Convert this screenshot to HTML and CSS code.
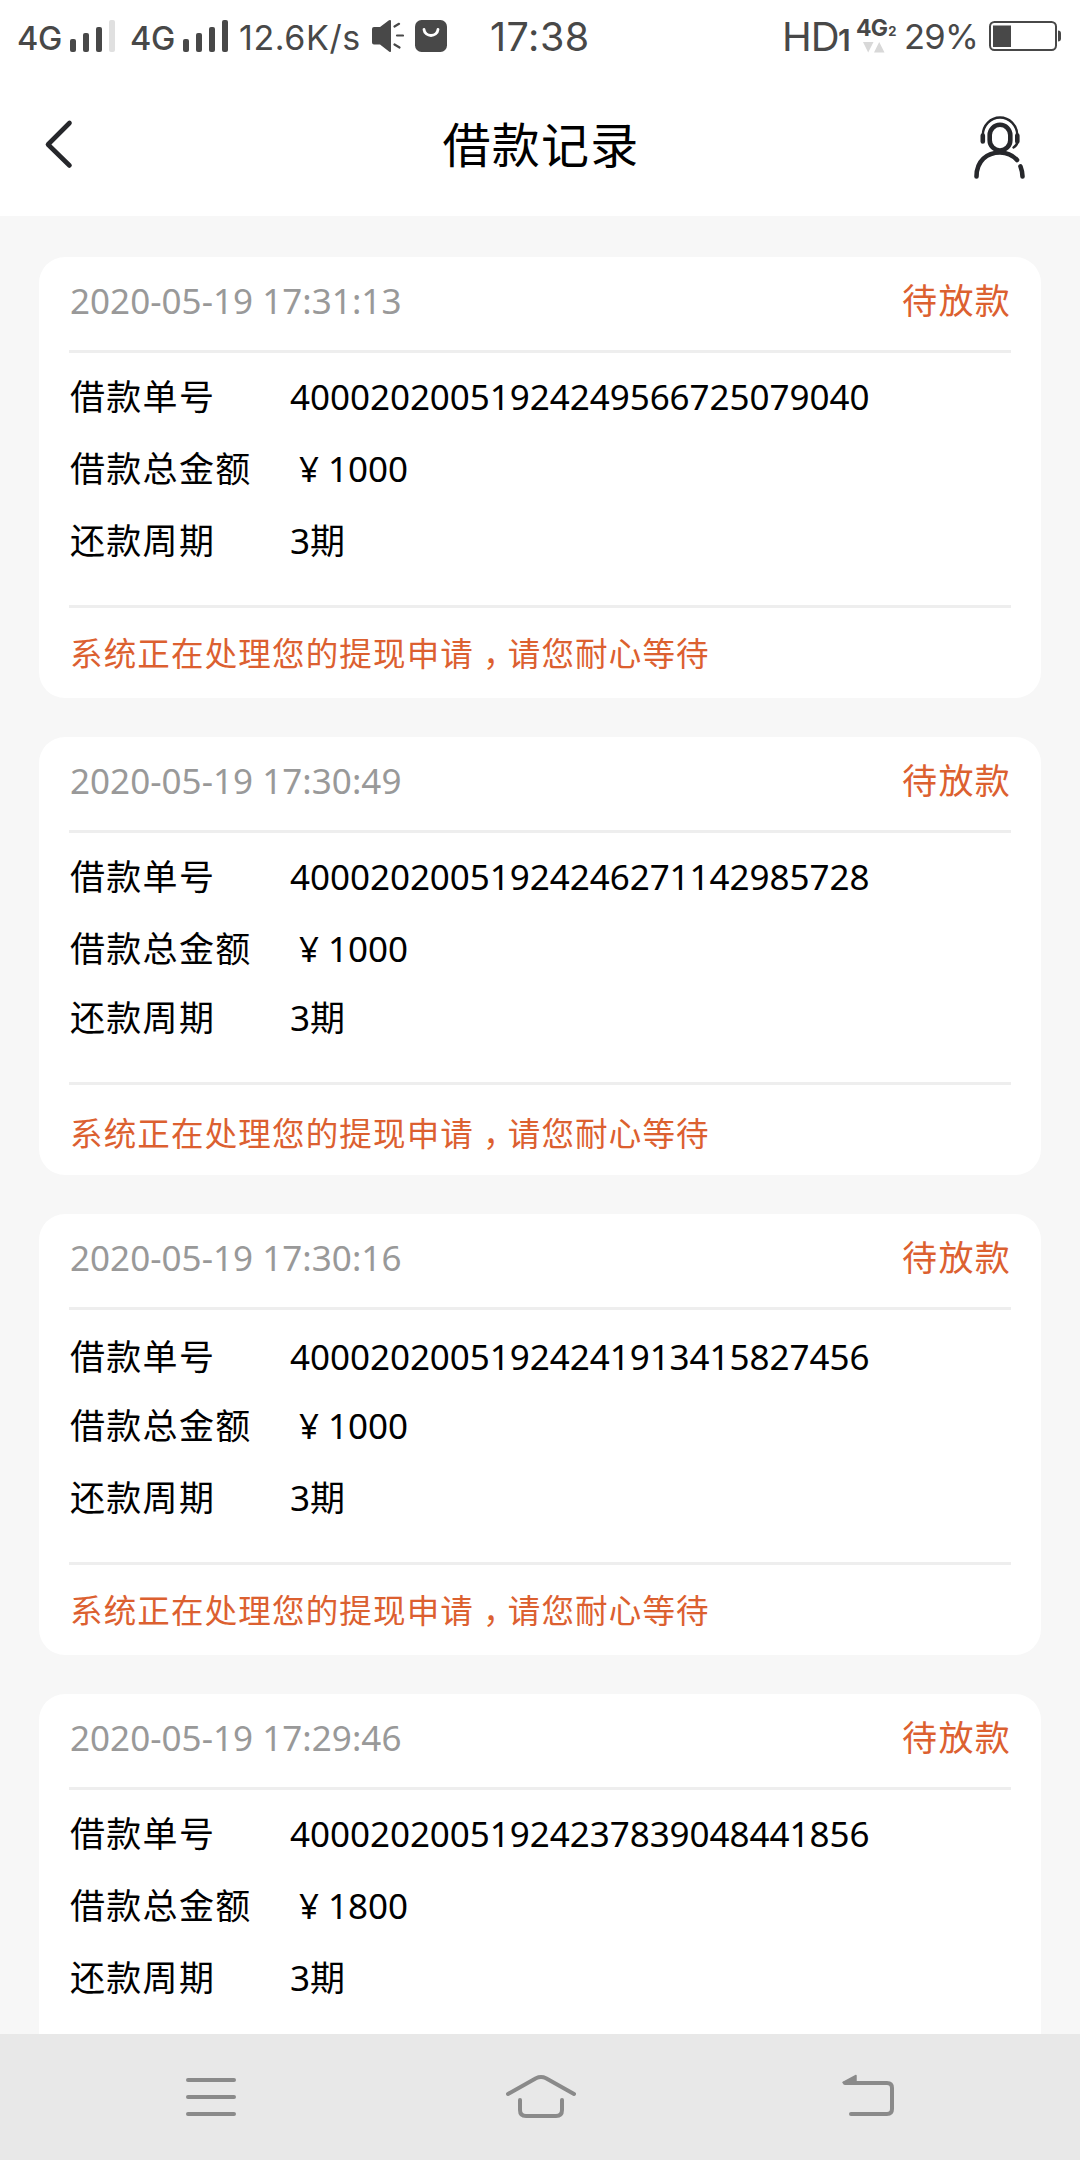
FILE: index.html
```html
<!DOCTYPE html>
<html lang="zh-CN">
<head>
<meta charset="utf-8">
<title>借款记录</title>
<link rel="stylesheet" href="styles.css">
</head>
<body>
<div class="screen">
  <div class="status-bar">
    <span class="net">4G</span>
    <svg class="bars" width="46" height="72" viewBox="0 0 46 72"><rect x="0" y="39" width="6" height="13" rx="2"/><rect x="13" y="33" width="6" height="19" rx="2"/><rect x="26" y="27" width="6" height="25" rx="2"/><rect class="faint" x="39" y="20" width="6" height="32" rx="2"/></svg>
    <span class="net net-second">4G</span>
    <svg class="bars" width="46" height="72" viewBox="0 0 46 72"><rect x="0" y="39" width="6" height="13" rx="2"/><rect x="13" y="33" width="6" height="19" rx="2"/><rect x="26" y="27" width="6" height="25" rx="2"/><rect x="39" y="20" width="6" height="32" rx="2"/></svg>
    <span class="speed">12.6K/s</span>
    <svg class="speaker" width="32" height="72" viewBox="0 0 32 72"><path d="M2 27H8L17 20.2Q19 19.4 19 21V51Q19 52.600 17 51.400L8 44.500H2Q0 44.500 0 42.500V29Q0 27 2 27Z"/><path class="wave" d="M22.500 26.500L27 23.800M25 35.500H31M22.500 44.500L27.500 47.500"/></svg>
    <svg class="bag" width="32" height="72" viewBox="0 0 32 72"><rect x="0" y="20" width="32" height="32" rx="6.500"/><path d="M9 29.500C10 37.500 22 37.500 23 29.500"/></svg>
    <span class="clock">17:38</span>
    <span class="hd">HD</span><span class="hd-index">1</span>
    <div class="data">
      <div class="data-label">4G<span class="data-sim">2</span></div>
      <svg width="22" height="11" viewBox="0 0 22 11"><path d="M0 0H10.500L5.200 10.500Z M11 10.500H21.500L16.200 0Z"/></svg>
    </div>
    <span class="percent">29%</span>
    <svg class="battery" width="73" height="72" viewBox="0 0 73 72"><rect class="shell" x="1" y="22" width="66" height="28" rx="4.500"/><rect x="4" y="25.500" width="18" height="21.500"/><path d="M69 30.500Q72 30.500 72 33.500V38.500Q72 41.500 69 41.500Z"/></svg>
  </div>

  <header class="title-bar">
    <svg class="back" width="32" height="54" viewBox="0 0 32 54"><path d="M25.500 6L4 27.500L25.500 48.500"/></svg>
    <h1 class="title">借款记录</h1>
    <svg class="support" width="56" height="66" viewBox="0 0 56 66"><rect x="18.700" y="10.800" width="20.600" height="25.700" rx="10.300"/><path d="M5.500 62.500C5.500 47 16 38.500 29 38.500C36 38.500 41.500 41 46 46M49.500 52.500Q51.300 57 51.500 62.500"/><path class="cup" d="M11.800 21.500V27.500M46.300 21.500V27.500"/><path class="band" d="M11.800 21C12 11.500 19.500 3.500 29 3.500S46.100 11.500 46.300 21M46.500 28Q46 31.500 42.500 33.500"/></svg>
  </header>

  <main class="list">
    <article class="card">
      <div class="card-head"><time class="date">2020-05-19 17:31:13</time><span class="state">待放款</span></div>
      <dl class="details">
        <div class="row"><dt>借款单号</dt><dd>40002020051924249566725079040</dd></div>
        <div class="row"><dt>借款总金额</dt><dd><span class="yen">¥</span>1000</dd></div>
        <div class="row"><dt>还款周期</dt><dd>3期</dd></div>
      </dl>
      <p class="notice">系统正在处理您的提现申请<span class="comma">，</span>请您耐心等待</p>
    </article>

    <article class="card card-tight-end">
      <div class="card-head"><time class="date">2020-05-19 17:30:49</time><span class="state">待放款</span></div>
      <dl class="details">
        <div class="row"><dt>借款单号</dt><dd>40002020051924246271142985728</dd></div>
        <div class="row"><dt>借款总金额</dt><dd><span class="yen">¥</span>1000</dd></div>
        <div class="row"><dt>还款周期</dt><dd>3期</dd></div>
      </dl>
      <p class="notice">系统正在处理您的提现申请<span class="comma">，</span>请您耐心等待</p>
    </article>

    <article class="card card-tight-start">
      <div class="card-head"><time class="date">2020-05-19 17:30:16</time><span class="state">待放款</span></div>
      <dl class="details">
        <div class="row"><dt>借款单号</dt><dd>40002020051924241913415827456</dd></div>
        <div class="row"><dt>借款总金额</dt><dd><span class="yen">¥</span>1000</dd></div>
        <div class="row"><dt>还款周期</dt><dd>3期</dd></div>
      </dl>
      <p class="notice">系统正在处理您的提现申请<span class="comma">，</span>请您耐心等待</p>
    </article>

    <article class="card">
      <div class="card-head"><time class="date">2020-05-19 17:29:46</time><span class="state">待放款</span></div>
      <dl class="details">
        <div class="row"><dt>借款单号</dt><dd>40002020051924237839048441856</dd></div>
        <div class="row"><dt>借款总金额</dt><dd><span class="yen">¥</span>1800</dd></div>
        <div class="row"><dt>还款周期</dt><dd>3期</dd></div>
      </dl>
    </article>
  </main>

  <nav class="nav-bar">
    <svg width="72" height="60" viewBox="0 0 72 60"><path d="M13 10H59M13 27H59M13 44H59"/></svg>
    <svg width="72" height="60" viewBox="0 0 72 60"><path d="M4 24L32 8.200Q37 5.800 42 8.200L70 24M16 30V40Q16 46 22 46H52Q58 46 58 40V30"/></svg>
    <svg width="72" height="60" viewBox="0 0 72 60"><path d="M18 44H54Q59 44 59 39V18Q59 13 54 13H12"/><path class="tip" d="M10 12.500L23 5.500V13H11Z"/></svg>
  </nav>
</div>
</body>
</html>
```

FILE: styles.css
```css
* {
  box-sizing: border-box;
}

body,
h1,
dl,
dd,
p {
  margin: 0;
}

body {
  font-family: "Noto Sans", "Noto Sans CJK SC", sans-serif;
  background: #f7f7f7;
  color: #000;
}

svg {
  display: block;
  flex: none;
}

.screen {
  display: flex;
  flex-direction: column;
  width: 1080px;
  height: 2160px;
  overflow: hidden;
}

/* Status bar */

.status-bar {
  display: flex;
  flex: none;
  align-items: flex-start;
  height: 72px;
  padding-left: 17px;
  background: #fff;
  color: #484848;
  font-family: Inter, sans-serif;
  line-height: 1;
  white-space: nowrap;
  fill: #484848;
}

.status-bar span {
  flex: none;
}

.net {
  width: 53px;
  padding-top: 23px;
  font-size: 32.5px;
  font-weight: 500;
  letter-spacing: -0.4px;
}

.net-second {
  margin-left: 14px;
}

.faint {
  fill: #e0e0e0;
}

.speed {
  width: 133px;
  margin-left: 10px;
  padding-top: 20.5px;
  font-size: 34px;
  letter-spacing: 0.6px;
}

.wave {
  stroke: #484848;
  stroke-width: 2.2;
  stroke-linecap: round;
}

.bag {
  margin-left: 11px;
}

.bag path {
  fill: none;
  stroke: #fff;
  stroke-width: 2.8;
  stroke-linecap: round;
}

.clock {
  width: 335px;
  padding: 18px 0 0 43px;
  font-size: 39.5px;
  letter-spacing: 0.5px;
}

.hd {
  width: 56px;
  padding-top: 16.5px;
  font-size: 40px;
  letter-spacing: -1px;
}

.hd-index {
  width: 18px;
  padding-top: 25px;
  font-size: 30px;
  font-weight: 600;
}

.data {
  flex: none;
  width: 46px;
  padding-top: 17px;
  fill: #d8d8d8;
}

.data-label {
  height: 25px;
  font-size: 23px;
  font-weight: 700;
  letter-spacing: -0.8px;
}

.data-sim {
  margin-left: 1px;
  font-size: 13px;
}

.data svg {
  margin-left: 7px;
}

.percent {
  width: 87px;
  padding: 20px 0 0 2px;
  font-size: 34.5px;
  letter-spacing: -0.7px;
}

.shell {
  fill: none;
  stroke: #484848;
  stroke-width: 2;
}

/* Title bar */

.title-bar {
  display: flex;
  flex: none;
  align-items: center;
  justify-content: space-between;
  height: 144px;
  padding: 0 53px 0 44px;
  background: #fff;
  fill: none;
  stroke: #26272b;
  stroke-linecap: round;
  stroke-linejoin: round;
}

.back {
  margin-right: 35px;
  stroke-width: 4.6;
}

.title {
  padding-top: 1px;
  font-size: 48px;
  font-weight: 400;
  line-height: 72px;
  letter-spacing: 1.3px;
}

.support {
  margin-top: 6px;
  stroke-width: 4.6;
}

.band {
  stroke-width: 2.4;
}

/* Loan records */

.list {
  display: flex;
  flex: 1;
  flex-direction: column;
  gap: 39px;
  min-height: 0;
  padding: 41px 39px 0;
  overflow: hidden;
}

.card {
  flex: none;
  min-height: 438px;
  padding: 0 30px;
  border-radius: 26px;
  background: #fff;
  font-size: 35px;
}

.card-head {
  display: flex;
  justify-content: space-between;
  height: 93px;
  line-height: 87px;
}

.date {
  padding-left: 1px;
  color: #999;
  letter-spacing: 0.04px;
}

.state,
.notice {
  color: #dc6030;
}

.state,
.row dt {
  letter-spacing: 1.3px;
}

.details {
  height: 258px;
  padding-top: 8px;
  border: solid #eee;
  border-width: 3px 0;
}

.row {
  display: flex;
  height: 72px;
  padding-left: 1px;
  line-height: 72px;
}

.row dt {
  width: 220px;
}

.row dd {
  letter-spacing: -0.04px;
}

.yen {
  padding: 0 9px;
}

.notice {
  height: 90px;
  padding-left: 1px;
  font-size: 32.5px;
  line-height: 87px;
  letter-spacing: 1.17px;
}

/* Half-width comma set in the middle of a full-width cell */
.comma {
  padding: 0 7.25px 0 9px;
  font-family: "Noto Sans CJK SC", sans-serif;
  font-feature-settings: "halt";
}

.card-tight-end .details {
  height: 255px;
}

.card-tight-end .row:nth-child(2) {
  height: 69px;
}

.card-tight-end .notice {
  line-height: 93px;
}

.card-tight-start .details {
  padding-top: 11px;
}

.card-tight-start .row:first-child {
  height: 69px;
}

/* System navigation */

.nav-bar {
  display: flex;
  flex: none;
  justify-content: space-between;
  height: 126px;
  padding: 36px 175px 0;
  background: #e8e8e8;
  fill: none;
  stroke: #8a8a8a;
  stroke-width: 4;
  stroke-linecap: round;
  stroke-linejoin: round;
}

.tip {
  fill: #8a8a8a;
  stroke-width: 1.5;
}
```
